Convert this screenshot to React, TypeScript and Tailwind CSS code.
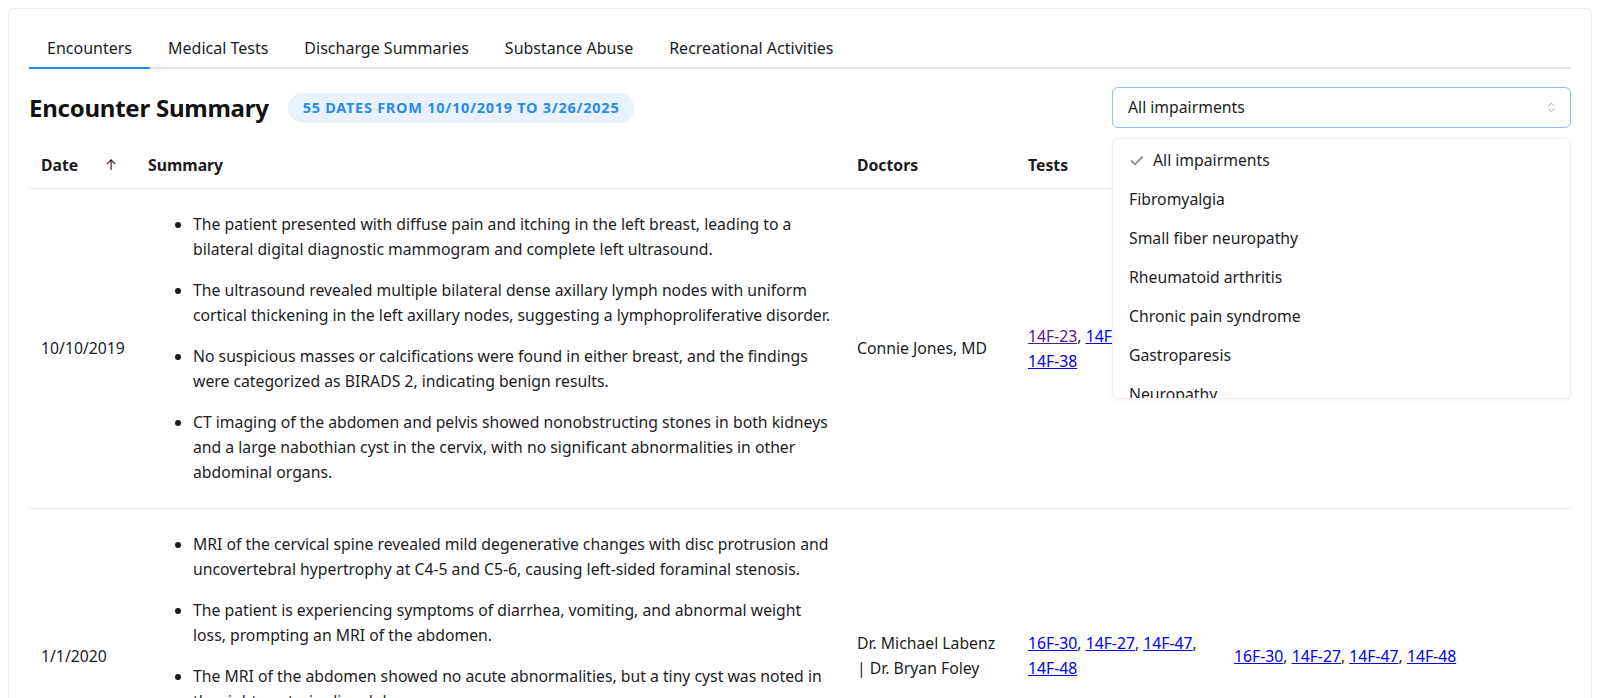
import { Check, ChevronsUpDown } from 'lucide-react';

const tabs = ['Encounters', 'Medical Tests', 'Discharge Summaries', 'Substance Abuse', 'Recreational Activities'];

const impairments = [
  'All impairments',
  'Fibromyalgia',
  'Small fiber neuropathy',
  'Rheumatoid arthritis',
  'Chronic pain syndrome',
  'Gastroparesis',
  'Neuropathy',
  'Migraine',
];

type Ref = { id: string; visited?: boolean };

type Encounter = {
  date: string;
  summary: string[];
  doctors: string;
  tests: Ref[];
  sources: Ref[];
};

const encounters: Encounter[] = [
  {
    date: '10/10/2019',
    summary: [
      'The patient presented with diffuse pain and itching in the left breast, leading to a bilateral digital diagnostic mammogram and complete left ultrasound.',
      'The ultrasound revealed multiple bilateral dense axillary lymph nodes with uniform cortical thickening in the left axillary nodes, suggesting a lymphoproliferative disorder.',
      'No suspicious masses or calcifications were found in either breast, and the findings were categorized as BIRADS 2, indicating benign results.',
      'CT imaging of the abdomen and pelvis showed nonobstructing stones in both kidneys and a large nabothian cyst in the cervix, with no significant abnormalities in other abdominal organs.',
    ],
    doctors: 'Connie Jones, MD',
    tests: [{ id: '14F-23', visited: true }, { id: '14F-31' }, { id: '14F-35' }, { id: '14F-38' }],
    sources: [{ id: '14F-23' }, { id: '14F-31' }, { id: '14F-38' }],
  },
  {
    date: '1/1/2020',
    summary: [
      'MRI of the cervical spine revealed mild degenerative changes with disc protrusion and uncovertebral hypertrophy at C4-5 and C5-6, causing left-sided foraminal stenosis.',
      'The patient is experiencing symptoms of diarrhea, vomiting, and abnormal weight loss, prompting an MRI of the abdomen.',
      'The MRI of the abdomen showed no acute abnormalities, but a tiny cyst was noted in the right posterior liver lobe.',
      'Laboratory results were within normal limits, and the patient was advised to follow up with gastroenterology for further evaluation.',
    ],
    doctors: 'Dr. Michael Labenz | Dr. Bryan Foley',
    tests: [{ id: '16F-30' }, { id: '14F-27' }, { id: '14F-47' }, { id: '14F-48' }],
    sources: [{ id: '16F-30' }, { id: '14F-27' }, { id: '14F-47' }, { id: '14F-48' }],
  },
];

function RefLinks({ refs }: { refs: Ref[] }) {
  return (
    <>
      {refs.map((r, i) => (
        <span key={r.id + i}>
          <a
            href="#"
            className={r.visited ? 'underline text-[#551a8b]' : 'underline text-[#0000ee]'}
          >
            {r.id}
          </a>
          {i < refs.length - 1 ? ', ' : ''}
        </span>
      ))}
    </>
  );
}

export default function App() {
  return (
    <div className="min-h-screen bg-white font-['Noto_Sans',Inter,sans-serif] text-[15.75px] text-[#1c1c1e] p-2">
      <div className="border border-[#ededed] rounded-md px-5 pt-5 pb-6">
        {/* Tabs */}
        <div className="flex border-b-2 border-[#e3e6ea]">
          {tabs.map((t, i) => (
            <button
              key={t}
              className={
                i === 0
                  ? 'px-[18px] py-2 text-[16px] leading-[22px] -mb-[2px] border-b-2 border-[#1d8cf0]'
                  : 'px-[18px] py-2 text-[16px] leading-[22px] -mb-[2px] border-b-2 border-transparent'
              }
            >
              {t}
            </button>
          ))}
        </div>

        {/* Title row */}
        <div className="flex items-center justify-between mt-[18px]">
          <div className="flex items-center gap-[19px]">
            <h1 className="text-[24px] font-bold leading-[40px] tracking-[-0.01em] text-[#111]">Encounter Summary</h1>
            <span className="rounded-full bg-[#e8f2fd] text-[#2a8be6] text-[14.5px] font-bold tracking-[0.05em] px-[15px] h-[30px] flex items-center">
              55 DATES FROM 10/10/2019 TO 3/26/2025
            </span>
          </div>

          <div className="relative w-[459px]">
            <button className="w-full h-[41px] flex items-center justify-between rounded-md border border-[#8fbdf4] pl-[15px] pr-[12px] bg-white">
              <span>All impairments</span>
              <ChevronsUpDown size={13} strokeWidth={1.6} className="text-[#9a9a9a]" />
            </button>
            <div className="absolute left-0 right-0 top-full mt-[10px] z-10 h-[261px] overflow-hidden rounded-md border border-[#eeeeee] bg-white shadow-[0_2px_6px_rgba(0,0,0,0.04)] pt-[2px]">
              {impairments.map((item, i) => (
                <div key={item} className="h-[39px] flex items-center px-4">
                  {i === 0 && <Check size={16} strokeWidth={2.8} className="text-[#8e8e8e] mr-[8px]" />}
                  <span>{item}</span>
                </div>
              ))}
            </div>
          </div>
        </div>

        {/* Table */}
        <table className="w-full table-fixed mt-[14px]">
          <colgroup>
            <col className="w-[107px]" />
            <col className="w-[709px]" />
            <col className="w-[171px]" />
            <col className="w-[206px]" />
            <col />
          </colgroup>
          <thead>
            <tr className="border-b border-[#ececec]">
              <th className="px-3 py-3 text-left font-bold leading-[22px]">
                <div className="flex items-center justify-between pr-[7px]">
                  <span>Date</span>
                  <span className="font-normal text-[14px]">↑</span>
                </div>
              </th>
              <th className="px-3 py-3 text-left font-bold leading-[22px]">Summary</th>
              <th className="px-3 py-3 text-left font-bold leading-[22px]">Doctors</th>
              <th className="px-3 py-3 text-left font-bold leading-[22px]">Tests</th>
              <th className="px-3 py-3 text-left font-bold leading-[22px]">Sources</th>
            </tr>
          </thead>
          <tbody>
            {encounters.map((e) => (
              <tr key={e.date} className="border-b border-[#ececec]">
                <td className="px-3 align-middle leading-[25px]">{e.date}</td>
                <td className="pl-3 pr-[10px] py-[23px] align-middle">
                  <ul className="list-disc pl-[45px] space-y-4 leading-[25px]">
                    {e.summary.map((s) => (
                      <li key={s}>{s}</li>
                    ))}
                  </ul>
                </td>
                <td className="pl-3 pr-4 align-middle leading-[25px]">{e.doctors}</td>
                <td className="px-3 align-middle leading-[25px]">
                  <RefLinks refs={e.tests} />
                </td>
                <td className="px-3 align-middle leading-[25px]">
                  <RefLinks refs={e.sources} />
                </td>
              </tr>
            ))}
          </tbody>
        </table>
      </div>
    </div>
  );
}
